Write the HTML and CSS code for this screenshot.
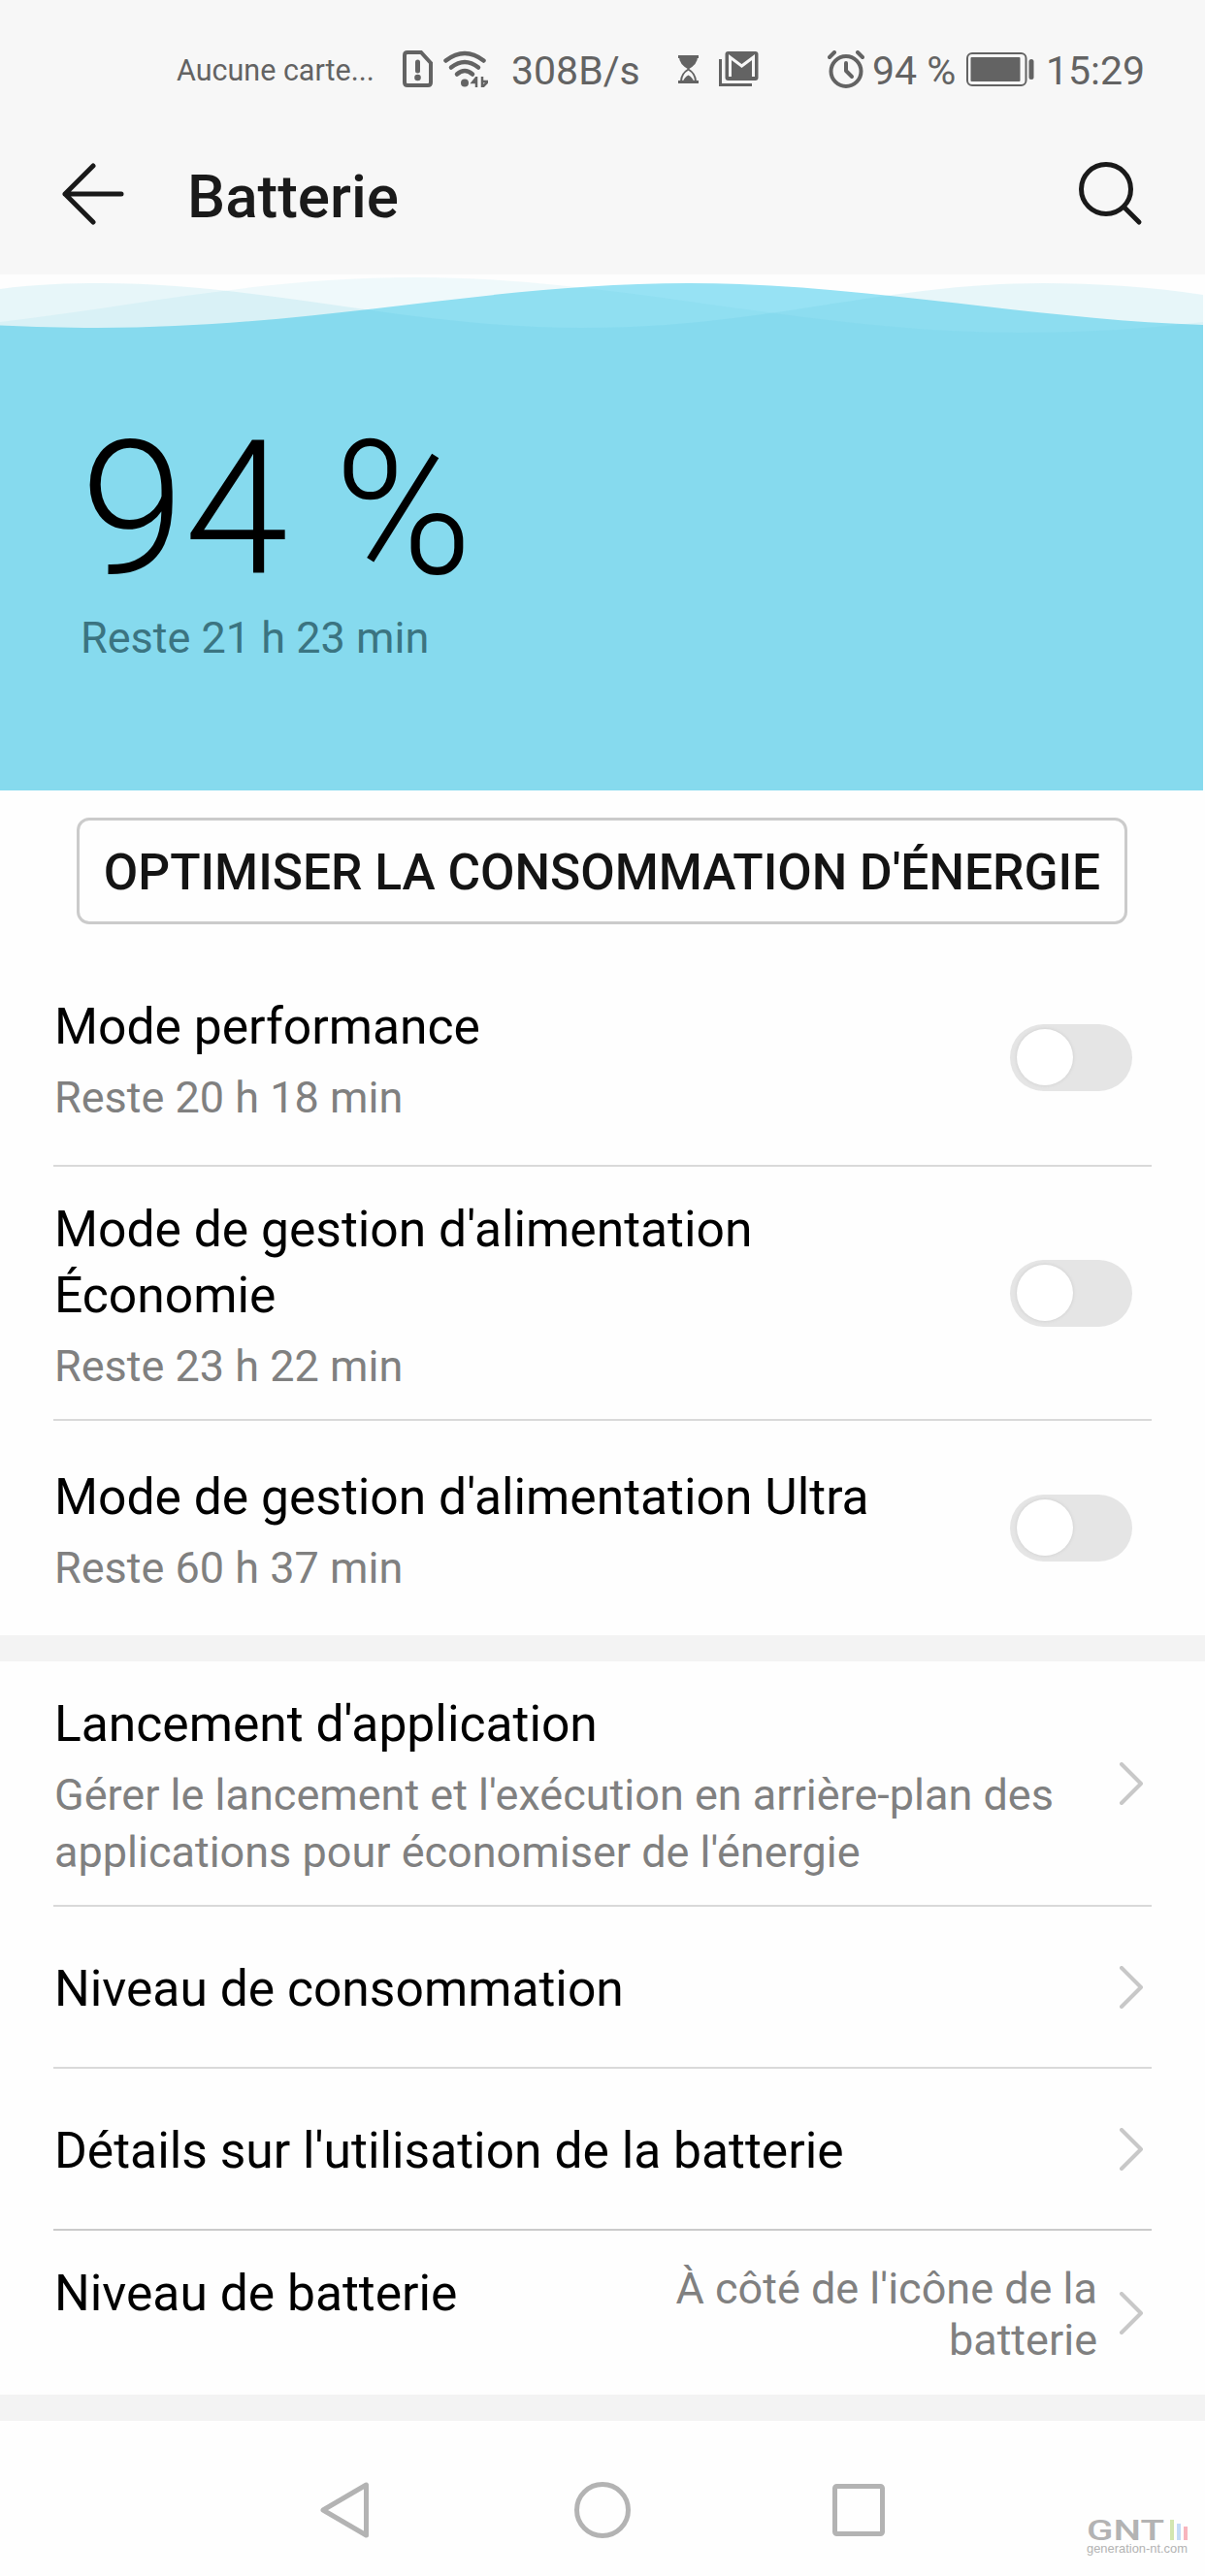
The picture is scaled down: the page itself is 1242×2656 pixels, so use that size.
FILE: index.html
```html
<!DOCTYPE html>
<html lang="fr">
<head>
    <meta charset="UTF-8">
    <meta name="viewport" content="width=device-width, initial-scale=1.0">
    <title>Batterie</title>
    <link rel="stylesheet" href="styles.css">
</head>
<body>
    <div class="top">
        <div class="status">
            <span class="carrier">Aucune carte...</span>
            <svg class="sim" width="31" height="38" viewBox="0 0 31 38">
                <path d="M5 2h14l10 11v20q0 3-3 3H5q-3 0-3-3V5q0-3 3-3z" fill="none" stroke="#636363" stroke-width="4"/>
                <path d="M15.500 12v9" stroke="#636363" stroke-width="5" stroke-linecap="round"/>
                <circle cx="15.500" cy="28" r="3.300" fill="#636363"/>
            </svg>
            <svg class="wifi" width="46" height="38" viewBox="0 0 46 38">
                <g fill="none" stroke="#636363" stroke-width="4.500" stroke-linecap="round">
                    <path d="M2.500 10.500q19.500-15 39 0"/>
                    <path d="M8 17.500q14-11 28 0"/>
                    <path d="M14 24.500q8-7 16 0"/>
                </g>
                <circle cx="22" cy="33.500" r="4" fill="#636363"/>
                <path d="M34 27v11M34 28l-4 5h4M40 27v11M40 32h6l-5 5" fill="none" stroke="#636363" stroke-width="2.500"/>
            </svg>
            <span class="speed">308B/s</span>
            <svg class="sand" width="21" height="29" viewBox="0 0 21 29">
                <path d="M0 1.500h21M0 27.500h21" stroke="#636363" stroke-width="3"/>
                <path d="M1 2h19q0 7-9.500 12.500Q1 9 1 2z" fill="#636363"/>
                <path d="M10.500 14.500Q3 19 3 27h15q0-8-7.500-12.500z" fill="none" stroke="#636363" stroke-width="2"/>
                <path d="M5 27q1-4 5.500-6.500Q15 23 16 27z" fill="#636363"/>
            </svg>
            <svg class="mail" width="41" height="36" viewBox="0 0 41 36">
                <path d="M1.500 8v26.500H34" fill="none" stroke="#636363" stroke-width="3"/>
                <rect x="6.500" width="34" height="30" rx="3" fill="#636363"/>
                <path d="M11.500 26V6l12 9 12-9v20" fill="none" stroke="#f7f7f7" stroke-width="3"/>
            </svg>
            <svg class="alarm" width="38" height="39" viewBox="0 0 38 39">
                <circle cx="19" cy="21.500" r="15.500" fill="none" stroke="#636363" stroke-width="4"/>
                <path d="M19 13v8l6 6" fill="none" stroke="#636363" stroke-width="4" stroke-linecap="round" stroke-linejoin="round"/>
                <path d="M2 7l5-5M36 7l-5-5" stroke="#636363" stroke-width="4" stroke-linecap="round"/>
            </svg>
            <span class="level">94 %</span>
            <svg class="cell" width="70" height="35" viewBox="0 0 70 35">
                <rect x="1" y="1" width="60.500" height="33" rx="5" fill="none" stroke="#636363" stroke-width="2"/>
                <rect x="4.500" y="5" width="51" height="25" rx="1" fill="#636363"/>
                <rect x="64.500" y="7" width="5" height="21" rx="2.500" fill="#636363"/>
            </svg>
            <span class="clock">15:29</span>
        </div>
        <div class="header">
            <svg width="64" height="64" viewBox="0 0 64 64">
                <path d="M32 3L3 32l29 29M3 32h58" fill="none" stroke="#1a1a1a" stroke-width="5" stroke-linecap="round" stroke-linejoin="round"/>
            </svg>
            <h1>Batterie</h1>
            <svg class="search" width="66" height="66" viewBox="0 0 66 66">
                <circle cx="28" cy="28" r="25.500" fill="none" stroke="#1a1a1a" stroke-width="5"/>
                <path d="M46.500 46.500L62 62" stroke="#1a1a1a" stroke-width="5" stroke-linecap="round"/>
            </svg>
        </div>
    </div>

    <div class="hero">
        <svg class="waves" width="1240" height="532" viewBox="0 0 1240 532">
            <path class="wave-main" d="M0 52.500C35 54 65 55 100 55C330 55 500 9 710 9C890 9 1060 46 1240 52V532H0z"/>
            <path class="wave-a" d="M0 15C35 10 70 9 105 9C270 9 420 55 600 55C790 55 910 9 1075 9C1130 9 1190 13 1240 21V532H0z"/>
            <path class="wave-b" d="M0 49C150 31 270 3 430 3C640 3 830 60 1050 60C1120 60 1180 56 1240 49V532H0z"/>
        </svg>
        <div class="hero-text">
            <div class="percent">94 %</div>
            <div class="remain">Reste 21 h 23 min</div>
        </div>
    </div>

    <button class="btn">OPTIMISER LA CONSOMMATION D'ÉNERGIE</button>

    <div class="row perf">
        <div class="text">
            <h2>Mode performance</h2>
            <p>Reste 20 h 18 min</p>
        </div>
        <div class="switch"><div class="knob"></div></div>
    </div>
    <div class="row eco">
        <div class="text">
            <h2>Mode de gestion d'alimentation<br>Économie</h2>
            <p>Reste 23 h 22 min</p>
        </div>
        <div class="switch"><div class="knob"></div></div>
    </div>
    <div class="row ultra">
        <div class="text">
            <h2>Mode de gestion d'alimentation Ultra</h2>
            <p>Reste 60 h 37 min</p>
        </div>
        <div class="switch"><div class="knob"></div></div>
    </div>

    <div class="separator"></div>

    <div class="row launch">
        <div class="text">
            <h2>Lancement d'application</h2>
            <p>Gérer le lancement et l'exécution en arrière-plan des<br>applications pour économiser de l'énergie</p>
        </div>
        <svg class="chevron" width="26" height="44" viewBox="0 0 26 44"><path d="M3 2l20 20L3 42"/></svg>
    </div>
    <div class="row usage">
        <div class="text"><h2>Niveau de consommation</h2></div>
        <svg class="chevron" width="26" height="44" viewBox="0 0 26 44"><path d="M3 2l20 20L3 42"/></svg>
    </div>
    <div class="row details">
        <div class="text"><h2>Détails sur l'utilisation de la batterie</h2></div>
        <svg class="chevron" width="26" height="44" viewBox="0 0 26 44"><path d="M3 2l20 20L3 42"/></svg>
    </div>
    <div class="row display">
        <h2>Niveau de batterie</h2>
        <div class="value">À côté de l'icône de la<br>batterie</div>
        <svg class="chevron" width="26" height="44" viewBox="0 0 26 44"><path d="M3 2l20 20L3 42"/></svg>
    </div>

    <div class="separator"></div>

    <div class="nav">
        <svg class="back" width="52" height="60" viewBox="0 0 52 60"><path d="M48.500 4v52L4 30z"/></svg>
        <svg class="home" width="60" height="60" viewBox="0 0 60 60"><circle cx="30" cy="30" r="26.500"/></svg>
        <svg class="recent" width="54" height="54" viewBox="0 0 54 54"><rect x="2.500" y="2.500" width="49" height="49" rx="2"/></svg>
        <svg class="logo" width="112" height="56" viewBox="0 0 112 56">
            <text class="logo-name" x="0" y="29" textLength="80" lengthAdjust="spacingAndGlyphs">GNT</text>
            <rect x="86" y="8" width="4" height="21" fill="#d3e6b0"/>
            <rect x="93" y="12" width="4" height="17" fill="#c3dbf7"/>
            <rect x="100" y="15" width="4" height="14" fill="#f7b4bd"/>
            <text class="logo-site" x="0" y="42" textLength="104" lengthAdjust="spacingAndGlyphs">generation-nt.com</text>
        </svg>
    </div>
</body>
</html>
```
FILE: styles.css
```css
*{
    padding: 0;
    margin: 0;
    box-sizing: border-box;
}
body{
    width: 1242px;
    height: 2656px;
    overflow: hidden;
    background-color: #fefefe;
    font-family: 'Roboto', sans-serif;
    color: #000;
}
svg{
    display: block;
    flex-shrink: 0;
}
.top{
    height: 283px;
    background-color: #f7f7f7;
}
.status{
    height: 142px;
    padding-left: 182px;
    display: flex;
    align-items: center;
    font-size: 41px;
    color: #636363;
    white-space: nowrap;
}
.status span{
    line-height: 50px;
    padding-top: 4px;
}
.status .carrier{
    width: 233px;
    font-size: 30.5px;
}
.wifi{
    margin-left: 11px;
}
.status .speed{
    width: 172px;
    margin-left: 24px;
}
.mail{
    margin-left: 21px;
}
.alarm{
    margin-left: 71px;
}
.status .level{
    width: 97px;
    margin-left: 8px;
}
.status .clock{
    margin-left: 12px;
}
.header{
    height: 116px;
    padding: 0 64px;
    display: flex;
    align-items: center;
}
.header h1{
    flex: 1;
    margin-left: 65px;
    padding-top: 6px;
    font-size: 62px;
    font-weight: 500;
    line-height: 72px;
    color: #1a1a1a;
}
/* waves sit under the level text */
.hero{
    position: relative;
    width: 1240px;
    height: 532px;
}
.waves{
    position: absolute;
    top: 0;
    left: 0;
}
.wave-main{
    fill: #97e2f4;
}
.wave-a{
    fill: rgba(78, 190, 215, 0.13);
}
.wave-b{
    fill: rgba(67, 192, 220, 0.08);
}
.hero-text{
    position: relative;
    padding: 142px 0 0 83px;
}
.percent{
    font-size: 193px;
    font-weight: 300;
    line-height: 200px;
}
.remain{
    margin-top: 4px;
    font-size: 45px;
    line-height: 58px;
    color: #3b7481;
}
.btn{
    display: block;
    width: 1083px;
    height: 110px;
    margin: 28px 0 27px 79px;
    padding-top: 2px;
    border: 3px solid #cbcbcb;
    border-radius: 13px;
    background-color: #fefefe;
    font-family: inherit;
    font-size: 51.5px;
    font-weight: 500;
    color: #141414;
    white-space: nowrap;
}
.row{
    margin: 0 55px;
    padding-left: 1px;
    display: flex;
    align-items: center;
    border-bottom: 2px solid #d9d9d9;
}
.text{
    flex: 1;
    padding-top: 5px;
}
.row h2{
    font-size: 51.6px;
    font-weight: 400;
    line-height: 68px;
    white-space: nowrap;
}
.row p{
    margin-top: 9px;
    font-size: 45px;
    line-height: 59px;
    color: #808080;
    white-space: nowrap;
}
.perf{
    height: 223px;
}
.eco{
    height: 262px;
}
.ultra{
    height: 221px;
    border-bottom: none;
}
.launch{
    height: 253px;
}
.usage{
    height: 167px;
}
.details{
    height: 167px;
    border-color: #cbcbcb;
}
.display{
    height: 169px;
    border-bottom: none;
}
.display h2{
    align-self: flex-start;
    padding-top: 31px;
}
.value{
    flex: 1;
    padding-top: 3px;
    font-size: 45px;
    line-height: 53px;
    text-align: right;
    color: #808080;
}
.switch{
    width: 126px;
    height: 69px;
    margin-right: 20px;
    padding: 5px 7px;
    border-radius: 35px;
    background-color: #e5e5e5;
}
.knob{
    width: 58px;
    height: 58px;
    border-radius: 50%;
    background-color: #fff;
    box-shadow: 0 0 3px 1px #d6d6d6;
}
.chevron{
    margin-right: 8px;
    fill: none;
    stroke: #c8c8c8;
    stroke-width: 4;
    stroke-linecap: round;
    stroke-linejoin: round;
}
.display .chevron{
    margin-left: 22px;
}
.separator{
    height: 27px;
    background-color: #f3f3f3;
}
.nav{
    height: 160px;
    padding: 24px 0 0 329px;
    display: flex;
    align-items: center;
    fill: none;
    stroke: #b3b3b3;
    stroke-width: 5;
    stroke-linejoin: round;
}
.home{
    margin-left: 210px;
}
.recent{
    margin-left: 207px;
}
.logo{
    margin: 60px 0 0 208px;
    overflow: visible;
    stroke: none;
    fill: #b3b3b3;
}
.logo-name{
    font: 500 29px 'Roboto', sans-serif;
}
.logo-site{
    font: 13px 'Liberation Sans', sans-serif;
}
```
